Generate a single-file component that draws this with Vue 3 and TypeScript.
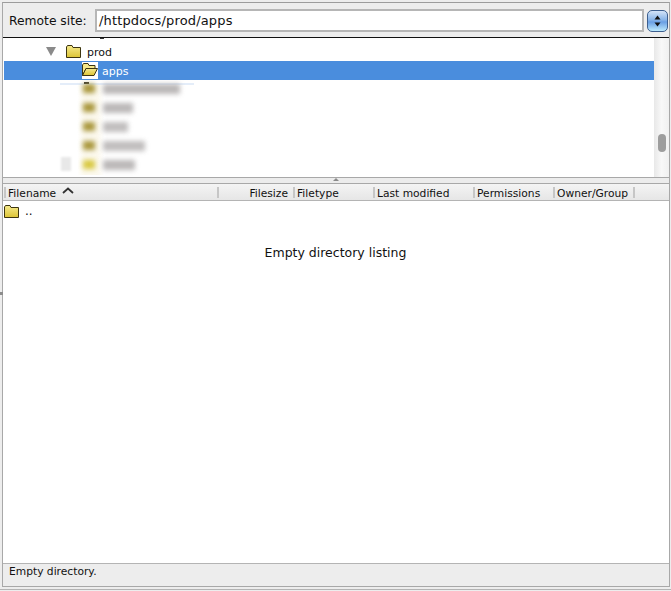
<script setup lang="ts">
interface Col { label: string; width: number; align?: string }
const cols: Col[] = [
  { label: 'Filesize', width: 76, align: 'right' },
  { label: 'Filetype', width: 80 },
  { label: 'Last modified', width: 100 },
  { label: 'Permissions', width: 80 },
  { label: 'Owner/Group', width: 80 },
]
const blurred = [
  { w: 77, c: '#a8963a', t: '#a9a5a5' },
  { w: 30, c: '#a8963a', t: '#aaa6a6' },
  { w: 25, c: '#a8963a', t: '#b0adad' },
  { w: 42, c: '#a8963a', t: '#b0adad' },
  { w: 32, c: '#d8c840', t: '#aaa6a6' },
]
</script>

<template>
  <div class="window">
    <i class="side-notch"></i>
    <div class="frame">
      <div class="site-bar">
        <span class="site-label">Remote site:</span>
        <div class="site-input">/httpdocs/prod/apps</div>
        <div class="stepper">
          <svg width="19" height="20" viewBox="0 0 19 20">
            <path d="M9.5 4.5 L12.5 8.5 L6.5 8.5 Z M6.5 11.5 L12.5 11.5 L9.5 15.5 Z" fill="#111" />
          </svg>
        </div>
      </div>
      <div class="tree-pane">
        <div class="tree">
          <div class="cut-mark top"></div>
          <div class="row prod">
            <svg class="twisty" width="10" height="9" viewBox="0 0 10 9"><path d="M0 0 H10 L5 9 Z" fill="#8a8a8a" /></svg>
            <svg class="folder" width="15" height="13" viewBox="0 0 15 13">
              <defs>
                <linearGradient id="fold" x1="0" y1="0" x2="0" y2="1">
                  <stop offset="0" stop-color="#f6ea8e" />
                  <stop offset="1" stop-color="#dcc435" />
                </linearGradient>
              </defs>
              <path d="M.5 12.5 V2 L1.5 .5 H6 L7 2.5 H14.5 V12.5 Z" fill="url(#fold)" stroke="#3d3510" />
            </svg>
            <span class="row-text">prod</span>
          </div>
          <div class="row selected">
            <svg class="open-folder" width="16" height="17" viewBox="0 0 16 17">
              <rect x="0" y="0" width="16" height="17" fill="#fff" />
              <path d="M.5 13.5 V3 L1.5 1.5 H6 L7 3.5 H13 V6.5 H4 L.5 13.5 Z" fill="#f5e88a" stroke="#3d3510" />
              <path d="M.5 13.5 H12 L15.5 6.5 H4 Z" fill="url(#fold)" stroke="#3d3510" />
            </svg>
            <span class="row-text">apps</span>
          </div>
          <div class="blur-zone">
            <i class="cut-mark under"></i>
            <div v-for="(b, i) in blurred" :key="i" class="blur-row">
              <i class="blur-icon" :style="{ background: b.c }"></i>
              <i class="blur-text" :style="{ width: b.w + 'px', background: b.t }"></i>
            </div>
            <i class="blur-side"></i>
          </div>
        </div>
        <div class="scrollbar"><div class="thumb"></div></div>
      </div>
      <div class="splitter"><i class="grip"></i></div>
      <div class="list-pane">
        <div class="list-head">
          <div class="col-name">
            <span>Filename</span>
            <svg width="12" height="7" viewBox="0 0 12 7"><path d="M1 6 L6 1.5 L11 6" fill="none" stroke="#333" stroke-width="1.8" /></svg>
          </div>
          <div
            v-for="c in cols"
            :key="c.label"
            class="col"
            :class="{ end: c.align === 'right' }"
            :style="{ width: c.width + 'px' }"
          >{{ c.label }}</div>
          <div class="col-rest"></div>
        </div>
        <div class="list-body">
          <div class="parent">
            <svg width="15" height="13" viewBox="0 0 15 13">
              <path d="M.5 12.5 V2 L1.5 .5 H6 L7 2.5 H14.5 V12.5 Z" fill="url(#fold)" stroke="#3d3510" />
            </svg>
            <span class="dots">..</span>
          </div>
          <div class="empty">Empty directory listing</div>
        </div>
        <div class="status">Empty directory.</div>
      </div>
    </div>
    <div class="foot-line"></div>
  </div>
</template>

<style>
html, body { margin: 0; background: #ededed; }
</style>

<style scoped>
.window {
  position: relative;
  width: 671px;
  height: 591px;
  box-sizing: border-box;
  padding-top: 2px;
  background: #ededed;
  overflow: hidden;
  font-family: "DejaVu Sans", "Open Sans", sans-serif;
  font-size: 12px;
  color: #111;
}
.side-notch {
  position: absolute;
  left: 0;
  top: 292px;
  width: 3px;
  height: 3px;
  background: #8c8c8c;
}
.frame {
  height: 585px;
  box-sizing: border-box;
  margin: 0 1px 0 2px;
  border: 1px solid #a8a8a8;
  border-top-color: #9c9c9c;
  border-bottom: 1px solid #a8a8a8;
  display: flex;
  flex-direction: column;
}
.foot-line {
  height: 1px;
  margin-top: 2px;
  background: #b4b4b4;
}
.site-bar {
  height: 35px;
  flex: none;
  box-sizing: border-box;
  display: flex;
  align-items: center;
  padding: 1px 1px 0 6px;
  border-bottom: 1px solid #111;
}
.site-label { width: 86px; font-size: 12.3px; flex: none; }
.site-input {
  width: 549px;
  height: 23px;
  box-sizing: border-box;
  flex: none;
  background: #fff;
  border: 2px solid #b6b6b6;
  padding-left: 2px;
  line-height: 19px;
  font-size: 13px;
  letter-spacing: 0.15px;
}
.stepper {
  width: 21px;
  height: 22px;
  margin-left: 3px;
  flex: none;
  border-radius: 5px;
  border: 1px solid #3d5f8f;
  box-sizing: border-box;
  background: linear-gradient(#d4e4f8 0%, #86b3e8 45%, #6a9fe4 55%, #bdeafd 100%);
  display: flex;
  align-items: center;
  justify-content: center;
}
.stepper svg { flex: none; }
.tree-pane {
  height: 140px;
  flex: none;
  display: flex;
  background: #fff;
  border-bottom: 1px solid #a8a8a8;
  box-sizing: border-box;
}
.tree { flex: 1; position: relative; overflow: hidden; padding-top: 4px; }
.cut-mark { position: absolute; display: block; background: #333; }
.cut-mark.top { left: 97px; top: 0; width: 4px; height: 1px; }
.cut-mark.under { left: 24px; top: -3px; width: 5px; height: 2px; }
.row { height: 19px; display: flex; align-items: center; font-size: 11px; }
.prod { padding-left: 43px; }
.twisty { margin-right: 10px; flex: none; }
.folder { margin-right: 6px; flex: none; margin-top: -1px; }
.selected {
  background: #4a8ddd;
  color: #fff;
  padding-left: 78px;
  margin-left: 1px;
}
.open-folder { flex: none; margin-right: 4px; }
.row-text { line-height: 19px; margin-top: 2px; }
.blur-zone {
  position: relative;
  display: flex;
  flex-direction: column;
  box-sizing: border-box;
  margin-left: 57px;
  width: 134px;
  height: 92px;
  margin-top: 3px;
  border-top: 2px solid #e4edf9;
  background: linear-gradient(90deg, #fff 13%, #fcf9ee 18%, #fcf9ee 28%, #fff 33%);
}
.blur-row {
  height: 19px;
  flex: none;
  display: flex;
  align-items: center;
  padding-left: 23px;
}
.blur-row:first-of-type { margin-top: -6px; }
.blur-icon {
  width: 12px;
  height: 9px;
  filter: blur(2.4px);
  flex: none;
  margin-right: 8px;
}
.blur-text { height: 10px; filter: blur(2.8px); flex: none; opacity: 0.8; }
.blur-side {
  position: absolute;
  left: 1px;
  top: 72px;
  width: 10px;
  height: 14px;
  background: #e8e8e8;
  filter: blur(1px);
}
.scrollbar {
  width: 15px;
  flex: none;
  background: linear-gradient(90deg, #e8e8e8, #f8f8f8 50%, #f0f0f0);
  position: relative;
}
.thumb {
  position: absolute;
  left: 4px;
  top: 96px;
  width: 8px;
  height: 18px;
  border-radius: 4px;
  background: #9d9d9d;
}
.splitter {
  height: 5px;
  flex: none;
  position: relative;
  box-sizing: border-box;
  background: #ececec;
}
.grip {
  position: absolute;
  left: 330px;
  top: 0;
  width: 0;
  height: 0;
  border: 3px solid transparent;
  border-top: 0;
  border-bottom: 3px solid #8a8a8a;
}
.list-pane {
  flex: 1;
  min-height: 0;
  display: flex;
  flex-direction: column;
  border-top: 1px solid #a8a8a8;
}
.list-head {
  height: 17px;
  flex: none;
  display: flex;
  align-items: center;
  box-sizing: border-box;
  padding-top: 1px;
  border-bottom: 1px solid #b4b4b4;
  background: linear-gradient(#f4f4f4, #e6e6e6);
  font-size: 10.7px;
}
.col-name {
  width: 213px;
  height: 11px;
  line-height: 13px;
  flex: none;
  box-sizing: border-box;
  padding-left: 2px;
  border-left: 2px solid #c6c6c6;
  margin-left: 1px;
  display: flex;
  align-items: center;
  gap: 6px;
}
.col-name span { margin-top: 2px; }
.col-name svg { margin-top: -4px; }
.col {
  flex: none;
  height: 11px;
  line-height: 13px;
  box-sizing: border-box;
  border-left: 2px solid #c6c6c6;
  padding-left: 2px;
  white-space: nowrap;
}
.col.end { text-align: right; padding: 0 5px 0 0; }
.col-rest { height: 11px; border-left: 2px solid #c6c6c6; }
.list-body { flex: 1; min-height: 0; background: #fff; display: flex; flex-direction: column; }
.parent { display: flex; align-items: center; padding: 3px 0 0 1px; height: 14px; }
.dots { margin-left: 6px; font-size: 12px; }
.empty { margin-top: 27px; text-align: center; font-size: 12.5px; padding-right: 1px; }
.status {
  height: 23px;
  flex: none;
  box-sizing: border-box;
  border-top: 1px solid #b4b4b4;
  padding-left: 6px;
  line-height: 15px;
  font-size: 10.7px;
}
</style>
